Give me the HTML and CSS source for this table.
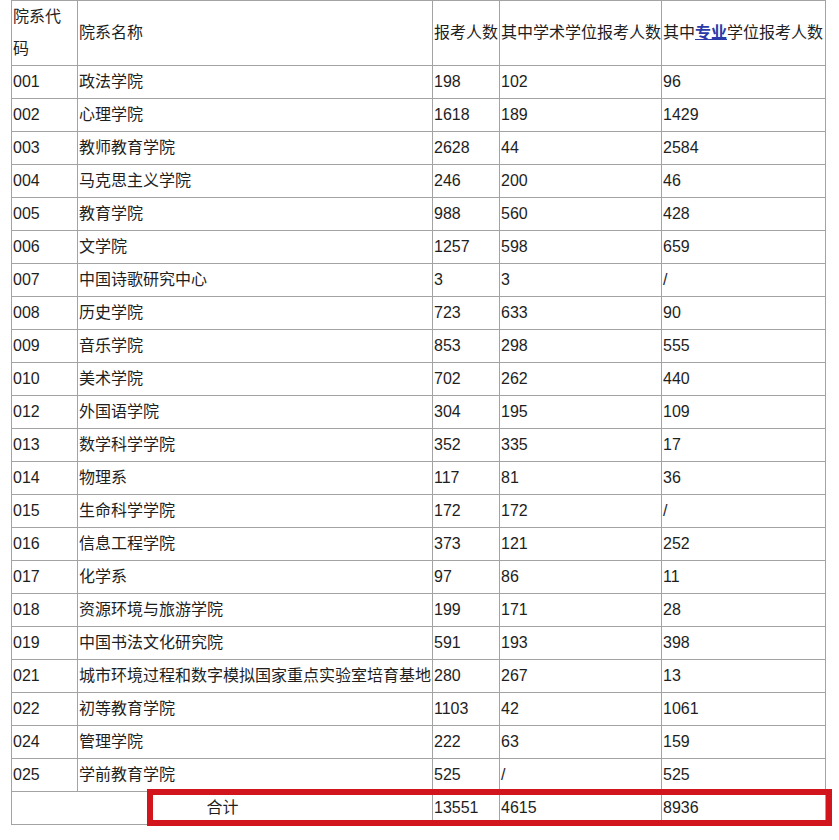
FILE: index.html
```html
<!DOCTYPE html>
<html lang="zh">
<head>
<meta charset="utf-8">
<link rel="stylesheet" href="styles.css">
</head>
<body>
<div class="page">
<table class="stats">
<colgroup>
<col class="c1"><col class="c2"><col class="c3"><col class="c4"><col class="c5">
</colgroup>
<tr><td class="wrap">院系代码</td><td>院系名称</td><td>报考人数</td><td>其中学术学位报考人数</td><td>其中<a class="kw">专业</a>学位报考人数</td></tr>
<tr><td>001</td><td>政法学院</td><td>198</td><td>102</td><td>96</td></tr>
<tr><td>002</td><td>心理学院</td><td>1618</td><td>189</td><td>1429</td></tr>
<tr><td>003</td><td>教师教育学院</td><td>2628</td><td>44</td><td>2584</td></tr>
<tr><td>004</td><td>马克思主义学院</td><td>246</td><td>200</td><td>46</td></tr>
<tr><td>005</td><td>教育学院</td><td>988</td><td>560</td><td>428</td></tr>
<tr><td>006</td><td>文学院</td><td>1257</td><td>598</td><td>659</td></tr>
<tr><td>007</td><td>中国诗歌研究中心</td><td>3</td><td>3</td><td>/</td></tr>
<tr><td>008</td><td>历史学院</td><td>723</td><td>633</td><td>90</td></tr>
<tr><td>009</td><td>音乐学院</td><td>853</td><td>298</td><td>555</td></tr>
<tr><td>010</td><td>美术学院</td><td>702</td><td>262</td><td>440</td></tr>
<tr><td>012</td><td>外国语学院</td><td>304</td><td>195</td><td>109</td></tr>
<tr><td>013</td><td>数学科学学院</td><td>352</td><td>335</td><td>17</td></tr>
<tr><td>014</td><td>物理系</td><td>117</td><td>81</td><td>36</td></tr>
<tr><td>015</td><td>生命科学学院</td><td>172</td><td>172</td><td>/</td></tr>
<tr><td>016</td><td>信息工程学院</td><td>373</td><td>121</td><td>252</td></tr>
<tr><td>017</td><td>化学系</td><td>97</td><td>86</td><td>11</td></tr>
<tr><td>018</td><td>资源环境与旅游学院</td><td>199</td><td>171</td><td>28</td></tr>
<tr><td>019</td><td>中国书法文化研究院</td><td>591</td><td>193</td><td>398</td></tr>
<tr><td>021</td><td>城市环境过程和数字模拟国家重点实验室培育基地</td><td>280</td><td>267</td><td>13</td></tr>
<tr><td>022</td><td>初等教育学院</td><td>1103</td><td>42</td><td>1061</td></tr>
<tr><td>024</td><td>管理学院</td><td>222</td><td>63</td><td>159</td></tr>
<tr><td>025</td><td>学前教育学院</td><td>525</td><td>/</td><td>525</td></tr>
<tr><td colspan="2" class="total">合计</td><td>13551</td><td>4615</td><td>8936</td></tr>
</table>
<div class="highlight"></div>
</div>
</body>
</html>
```
FILE: styles.css
```css
html, body {
  margin: 0;
  padding: 0;
  background: #ffffff;
}
.page {
  position: relative;
  padding-left: 11px;
  width: 828px;
  height: 840px;
  overflow: hidden;
}
.stats {
  border-collapse: collapse;
  table-layout: fixed;
  width: 815px;
  font-family: "Liberation Sans", "Noto Sans CJK SC", sans-serif;
  font-size: 16px;
  color: #1e1e1e;
}
.c1 { width: 66px; }
.c2 { width: 355px; }
.c3 { width: 67px; }
.c4 { width: 162px; }
.c5 { width: 164px; }
.stats td {
  border: 1px solid #a3a3a3;
  padding: 0 0 0 1px;
  line-height: 32px;
  height: 32px;
  vertical-align: middle;
  white-space: nowrap;
  overflow: visible;
}
.stats td.wrap {
  white-space: normal;
  word-break: break-all;
  padding-right: 3px;
}
.stats td.total {
  text-align: center;
}
.kw {
  color: #2a3aa8;
  font-weight: bold;
  text-decoration: underline;
}
.highlight {
  position: absolute;
  left: 147px;
  top: 789px;
  width: 673px;
  height: 25px;
  border: 6px solid #d2151c;
}
```
